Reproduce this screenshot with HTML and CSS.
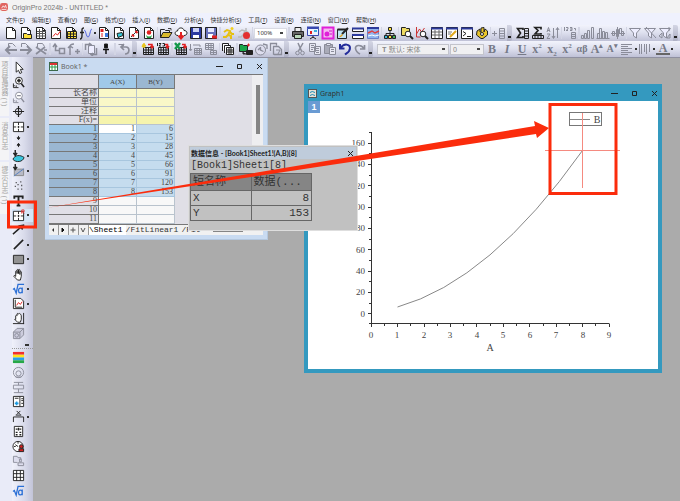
FILE: index.html
```html
<!DOCTYPE html>
<html lang="zh-CN">
<head>
    <meta charset="UTF-8">
    <meta name="viewport" content="width=device-width, initial-scale=1.0">
    <title>OriginPro 2024b - UNTITLED *</title>
    <link rel="stylesheet" href="styles.css">
</head>
<body>
    <!-- shared icon parts -->
    <svg class="defs" width="0" height="0">
        <symbol id="page" viewBox="0 0 14 14"><path d="M2.5 1.5h6l3 3v8h-9z" fill="#fff"/><path d="M8.5 1.5v3h3" fill="none"/></symbol>
        <symbol id="sheet" viewBox="0 0 14 14"><path d="M2.5 5.5h10v7h-10zM2.5 8h10M2.5 10.500h10M5 5.500v7M7.500 5.500v7M10 5.500v7"/></symbol>
        <symbol id="target" viewBox="0 0 14 14"><path d="M1.500 2.500h11v10h-11z" fill="#fff"/><path d="M7 2.500v3M7 9.500v3M1.500 7.500h3M9.500 7.500h3M6 7.500h2M7 6.500v2"/></symbol>
        <symbol id="root" viewBox="0 0 14 14"><path d="M1 8l1.500-1 2 5L6.500 2.500H13M11 6v6M11 8c-1-2-4-2-4 1.200s3 3.200 4 1" fill="none" stroke="#2a6fd6" stroke-width="1.400"/></symbol>
    </svg>

    <div class="app">
        <header class="title-bar">
            <svg class="logo" viewBox="0 0 10 10"><rect width="10" height="10" rx="3" fill="#e0655f"/><path d="M2 6.500l2-3 1.500 2L7 3l1 3.500M2 8h6" fill="none" stroke="#fff"/></svg>
            <span>OriginPro 2024b - UNTITLED *</span>
        </header>

        <nav class="menu-bar">
            <a href="#">文件(<u>F</u>)</a>
            <a href="#">编辑(<u>E</u>)</a>
            <a href="#">查看(<u>V</u>)</a>
            <a href="#">图(<u>G</u>)</a>
            <a href="#">格式(<u>O</u>)</a>
            <a href="#">插入(<u>I</u>)</a>
            <a href="#">数据(<u>D</u>)</a>
            <a href="#">分析(<u>A</u>)</a>
            <a href="#">快捷分析(<u>S</u>)</a>
            <a href="#">工具(<u>T</u>)</a>
            <a href="#">设置(<u>R</u>)</a>
            <a href="#">连接(<u>N</u>)</a>
            <a href="#">窗口(<u>W</u>)</a>
            <a href="#">帮助(<u>H</u>)</a>
        </nav>

        <!-- standard toolbar -->
        <div class="toolbar">
            <button class="tool" aria-label="新建项目"><svg viewBox="0 0 14 14"><use href="#page"/></svg></button>
            <button class="tool" aria-label="新建文件夹"><svg viewBox="0 0 14 14"><use href="#page"/><path d="M4.500 7.500h3l1 1h4v4h-8z" fill="#ffe23c"/></svg></button>
            <button class="tool" aria-label="新建工作簿"><svg viewBox="0 0 14 14"><use href="#page"/><path d="M3 5.500h9M3 7.500h9M3 10h9M5.500 3v9M8.500 3v9" stroke="#555"/></svg></button>
            <button class="tool" aria-label="新建图"><svg viewBox="0 0 14 14"><use href="#page"/><path d="M4 10.500l2.500-3 2 1.500 3-4" stroke="#e02020"/></svg></button>
            <button class="tool" aria-label="新建矩阵"><svg viewBox="0 0 14 14"><use href="#page"/><path d="M3.500 5.500h9v7h-9z" fill="#ffe23c"/><path d="M3.500 8h9M3.500 10.500h9M6.500 5.500v7M9.500 5.500v7"/></svg></button>
            <button class="tool" aria-label="新建函数图"><svg viewBox="0 0 14 14"><path d="M1 13c2 0 2-2 2-4V4c0-2 1-2 2-2M1 6.500h4" stroke-width="1.400"/><path d="M5 4c2 0 2 7 4 7s2-8 4-8" stroke="#4a5fe0"/></svg></button>
            <span class="caret"></span>
            <button class="tool" aria-label="新建布局"><svg viewBox="0 0 14 14"><use href="#page"/><path d="M3.500 3h3v3h-3z" fill="#e02020" stroke="none"/><path d="M8 7h3v4H8z" fill="#3a7be0" stroke="none"/><path d="M4 8h2M4 10h2" stroke="#e02020"/></svg></button>
            <button class="tool" aria-label="新建备注"><svg viewBox="0 0 14 14"><use href="#page"/><path d="M5 7.500l5-1 1 3-5 2z" fill="#35c8d8"/></svg></button>
            <button class="tool" aria-label="新建模板"><svg viewBox="0 0 14 14"><use href="#page"/><path d="M4 11l6-6" stroke="#333"/><path d="M8.500 5l2 2M5 8.500l2 2" stroke="#e02020" stroke-width="2"/></svg></button>
            <button class="tool" aria-label="新建图像"><svg viewBox="0 0 14 14"><use href="#page"/><circle cx="7" cy="6.500" r="2.300" fill="#e02020" stroke="none"/><path d="M4 9c2 2 4 2 6 0l-1 3H5z" fill="#25a045" stroke="none"/></svg></button>
            <span class="sep"></span>
            <button class="tool" aria-label="打开"><svg viewBox="0 0 14 14"><path d="M1.500 11.500v-8h4l1 1h4v2"/><path d="M1.500 11.500l2.500-5h9l-3 5z" fill="#d8b92c"/><path d="M9 2.500h3v2" stroke="#444"/></svg></button>
            <button class="tool" aria-label="导入"><svg viewBox="0 0 14 14"><path d="M4 9.500C0 9.500.500 5 3.500 5 4 1 9.500 1 10 4.500c4 0 4 5 0 5" fill="#fff"/><path d="M7 6v6M4.500 9.500L7 12.500l2.500-3" stroke="#e02020" stroke-width="2"/></svg></button>
            <button class="tool" aria-label="保存项目"><svg viewBox="0 0 14 14"><path d="M1.500 1.500h11v11h-11z" fill="#2c3aa0"/><path d="M4 2h6v4H4z" fill="#cfd4f4" stroke="none"/><path d="M4 9h6v3H4z" fill="#fff" stroke="none"/></svg></button>
            <button class="tool" aria-label="保存模板"><svg viewBox="0 0 14 14"><path d="M1.500 1.500h11v11h-11z" fill="#6872bb"/><path d="M4 2h6v4H4z" fill="#e6e8fa" stroke="none"/><path d="M4 8h5v4H4z" fill="#fff" stroke="none"/><path d="M8 9.500h5v3H8z" fill="#e02020" stroke="none"/></svg></button>
            <span class="sep wide"></span>
            <button class="tool" aria-label="重新计算"><svg viewBox="0 0 14 14"><circle cx="10" cy="2.500" r="1.500" fill="#f2cf1d" stroke="none"/><path d="M2 6l3-2 3 1-2 4 3 1v3M6 9l-2 2H1M8 6l2 2h2" stroke="#e6c010" stroke-width="2"/></svg></button>
            <button class="tool" aria-label="停止计算"><svg viewBox="0 0 14 14"><path d="M2 6l3-2 3 1-2 4M6 9l-2 2H1M9 2v3l3 2" stroke="#bbb" stroke-width="1.500"/><circle cx="9.500" cy="9.500" r="3.500" fill="#e33030" stroke="none"/></svg></button>
            <span class="sep"></span>
            <select class="combo zoom-level" aria-label="缩放"><option>100%</option></select>
            <span class="sep wide"></span>
            <button class="tool" aria-label="打印"><svg viewBox="0 0 14 14"><path d="M4 5V1.500h6V5" fill="#eee"/><path d="M1.500 5.500h11v5h-11z" fill="#666"/><path d="M3.500 8.500h7v4h-7z" fill="#b9d8b9"/></svg></button>
            <button class="tool" aria-label="幻灯片"><svg viewBox="0 0 14 14"><path d="M1.500 2.500h11v7h-11z" fill="#eaf4ff" stroke="#3949b0"/><path d="M1 1.500h12" stroke="#3949b0" stroke-width="2"/><path d="M7 10v2M4 13l3-2 3 2"/><path d="M4 5h2v3H4z" fill="#e02020" stroke="none"/><path d="M8 4h3v2H8z" fill="#3ab0e0" stroke="none"/></svg></button>
            <button class="tool" aria-label="视频"><svg viewBox="0 0 14 14"><path d="M1.500 1.500h11v11h-11z" fill="#f4b8f0" stroke="#e020d8" stroke-width="2"/><circle cx="6" cy="8" r="2.500" fill="#e020d8" stroke="none"/><path d="M8 5h3M9 8h2" stroke="#d010c8"/></svg></button>
            <button class="tool" aria-label="主题"><svg viewBox="0 0 14 14"><path d="M1.500 3.500h9v9h-9z" fill="#bfe3f5"/><path d="M1.500 3.500h10" stroke-width="2"/><path d="M6 8l6-6" stroke="#222" stroke-width="2"/><path d="M3 11l3-3 1 1-2 2z" fill="#e0a020" stroke="none"/></svg></button>
            <button class="tool" aria-label="排列窗口"><svg viewBox="0 0 14 14"><path d="M1.500 2.500h11v3h-11zM1.500 9.500h11v3h-11z" fill="#fff"/><path d="M1 2.500h12M1 9h12" stroke="#2c3a9c" stroke-width="2"/></svg></button>
            <button class="tool" aria-label="合并图"><svg viewBox="0 0 14 14"><path d="M1.500 2.500h11v10h-11z" fill="#8fb4ee" stroke="#6a80c8"/><path d="M1 2h12" stroke="#2c3a9c" stroke-width="2"/><path d="M2 7l4-2 3 2 4-2" stroke="#e04040" stroke-width="1.500"/><path d="M2 10l4-1 3 1 4-1" stroke="#fff"/></svg></button>
            <span class="sep"></span>
            <button class="tool" aria-label="项目管理器"><svg viewBox="0 0 14 14"><path d="M7 4v3M3 10V7.500h8V10M7 7v3"/><path d="M5.500 1.500h3v3h-3z" fill="#ffe23c"/><path d="M1.500 9.500h3v3h-3z" fill="#35b8d8"/><path d="M5.500 9.500h3v3h-3z" fill="#ffe23c"/><path d="M9.500 9.500h3v3h-3z" fill="#3fae58"/></svg></button>
            <span class="sep"></span>
            <button class="tool" aria-label="快速查找"><svg viewBox="0 0 14 14"><path d="M1.500 1.500h4l1 1h3v7h-8z" fill="#efdc62"/><circle cx="8" cy="8" r="2.800" fill="#fff"/><path d="M10 10l3 3" stroke-width="2"/></svg></button>
            <button class="tool" aria-label="查找数据"><svg viewBox="0 0 14 14"><path d="M1.500 1v10h4M1.500 8l3-5 2 3 3-4" stroke="#c33"/><circle cx="8" cy="8" r="2.800" fill="#fff"/><path d="M10 10l3 3" stroke-width="2"/></svg></button>
            <button class="tool" aria-label="结果日志"><svg viewBox="0 0 14 14"><path d="M1.500 1.500h11v11h-11z" fill="#fff"/><path d="M1 2.500h12" stroke="#2c3a9c" stroke-width="2"/><path d="M2 6h10M2 9h10M5 4v8M9 4v8" stroke="#666"/></svg></button>
            <button class="tool" aria-label="代码编辑"><svg viewBox="0 0 14 14"><path d="M1.500 1.500h11v11h-11z" fill="#fff"/><path d="M1 2.500h12" stroke="#2c3a9c" stroke-width="2"/><path d="M3 6h4M3 8h3" stroke="#777"/><path d="M5 11l6-6" stroke="#e0a81c" stroke-width="2"/></svg></button>
            <button class="tool" aria-label="命令窗口"><svg viewBox="0 0 14 14"><path d="M1.500 1.500h11v11h-11z" fill="#fff"/><path d="M1 2.500h12" stroke="#2c3a9c" stroke-width="2"/><path d="M3 5.500l3 2-3 2.500M7 10.500h4"/></svg></button>
            <button class="tool" aria-label="应用中心"><svg viewBox="0 0 14 14"><path d="M2 5l3-2v3h1V2l3-.500V6l1-3 2.500 2v4L8 12.500H6L1.500 9z" fill="#e9c52a"/><circle cx="7" cy="8" r="1.500" fill="#fff"/></svg></button>
            <span class="sep"></span>
            <button class="tool off" aria-label="添加列"><svg viewBox="0 0 14 14"><path d="M0 7.500h5M2.500 5v5M7.500 2.500h5v10h-5zM7.500 5h5M7.500 7.500h5M7.500 10h5"/></svg></button>
            <span class="handle"></span>
            <button class="tool" aria-label="列统计"><svg viewBox="0 0 14 14"><path d="M7 4V2.500H1.500l3 4.500-3 4.500H7V10" stroke-width="1.700"/><path d="M8.500 2.500h4v10h-4zM8.500 5h4M8.500 7.500h4M8.500 10h4"/></svg></button>
            <button class="tool" aria-label="行统计"><svg viewBox="0 0 14 14"><path d="M10 3.500V1.500H4l3 3-3 3.500h6V7" stroke-width="1.700"/><path d="M1.500 9.500h11v3h-11zM4 9.500v3M7 9.500v3M10 9.500v3"/></svg></button>
            <button class="tool off" aria-label="排序"><svg viewBox="0 0 14 14"><path d="M1 6l1.500-4.500L4 6M1.500 4.500h2M1 8h3l-3 4.500h3M7.500 2v10M6 10l1.500 2.500L9 10M11.500 12V2M10 4l1.500-2.500L13 4"/></svg></button>
            <span class="sep"></span>
            <button class="tool off" aria-label="设置列值"><svg viewBox="0 0 14 14"><path d="M1.500 1v4M3 1.500h2v1.500L3 4.500h2M7 1.500h2v3H7M7 3h2M11 2.500h1.500v2M8.500 6.500h4v6h-4zM8.500 8.500h4M8.500 10.500h4"/></svg></button>
            <span class="sep wide"></span>
            <button class="tool off" aria-label="柱状图"><svg viewBox="0 0 14 14"><path d="M.500 12.500v-3h2v3zM3.500 12.500v-5h2v5zM6.500 12.500v-8h2v8zM10.500 12.500v-11h2v11z"/></svg></button>
            <button class="tool off" aria-label="直方图"><svg viewBox="0 0 14 14"><path d="M.500 12.500h13M1.500 12.500v-5h2v5M3.500 12.500v-10h2v10M6.500 12.500v-7h2v7M9.500 12.500v-6h2v6"/></svg></button>
            <button class="tool off" aria-label="箱线图"><svg viewBox="0 0 14 14"><path d="M0 7.500h14M1.500 5.500h2v4h-2zM5.500 3.500h2v7h-2zM10.500 5.500h2v4h-2zM6.500 1v12M8.500 2.500h2v5h-2z"/></svg></button>
            <span class="sep"></span>
            <button class="tool off" aria-label="筛选"><svg viewBox="0 0 14 14"><path d="M1.500 2.500h11L8.500 7v5l-3-2V7z" fill="#eef"/></svg></button>
            <button class="tool off" aria-label="清除筛选"><svg viewBox="0 0 14 14"><path d="M1.500 2.500h11L8.500 7v5l-3-2V7z" fill="#eef"/><path d="M3 1l10 11"/></svg></button>
            <button class="tool off" aria-label="重新筛选"><svg viewBox="0 0 14 14"><path d="M1.500 2.500h11L8.500 7v5l-3-2V7z" fill="#eef"/><path d="M1 10l3-3v5zM9 12l3-4v4zM11 1v4"/></svg></button>
            <span class="handle"></span>
        </div>

        <!-- import, edit and format toolbar -->
        <div class="toolbar">
            <button class="tool off" aria-label="后退"><svg viewBox="0 0 14 14"><path d="M4.500 5V1.500h4l3 3"/><path d="M13 8H3M6 4L2 8l4 4" stroke-width="2"/></svg></button>
            <button class="tool off" aria-label="前进"><svg viewBox="0 0 14 14"><path d="M2.500 5V1.500h4l3 3"/><path d="M1 8h10M8 4l4 4-4 4" stroke-width="2"/></svg></button>
            <button class="tool off" aria-label="移除"><svg viewBox="0 0 14 14"><path d="M3.500 5V1.500h5l2 3"/><path d="M2 5l10 7M2 12l9-7M10 8h3" stroke-width="1.700"/></svg></button>
            <span class="sep wide"></span>
            <button class="tool off" aria-label="添加窗口"><svg viewBox="0 0 14 14"><path d="M1 5l2-3 2 3M3.500 3v5.500h4M7.500 6.500h5v5h-5z" stroke-width="1.500"/></svg></button>
            <button class="tool off" aria-label="添加链接"><svg viewBox="0 0 14 14"><path d="M3 13V5c0-2 2-3 4-3M1 6l2-2 3 2M8 9.500h5M10.500 7v5" stroke-width="1.500"/></svg></button>
            <span class="sep"></span>
            <button class="tool off" aria-label="刷新"><svg viewBox="0 0 14 14"><path d="M4.500 3.500h6v8h-6z" fill="#eef"/><path d="M1.500 8V2.500H7M12.500 6v6.500H7M5 1l2 1.500L5 4M9 11l-2 1.500L9 14" stroke-width="1.500"/></svg></button>
            <button class="tool" aria-label="固定"><svg viewBox="0 0 14 14"><path d="M5.500 2h3v4h-3z" fill="#111"/><path d="M4 7.500h6M7 8v4" stroke="#111" stroke-width="1.500"/></svg></button>
            <span class="sep wide"></span>
            <button class="tool off" aria-label="返回"><svg viewBox="0 0 14 14"><path d="M1.500 2.500h5v2"/><path d="M7 2L4 5l3 3M4 5h5c4 0 4 7-1 7" stroke-width="1.700"/></svg></button>
            <span class="handle"></span>
            <button class="tool" aria-label="导入向导"><svg viewBox="0 0 14 14"><use href="#sheet"/><path d="M1 3l4 1M3 1v5M1 5l3-3" stroke="#e8c61c" stroke-width="1.500"/><path d="M7 2.500h4V5M9.500 4l1.500 2 1.500-2" stroke="#e02020" stroke-width="1.500"/></svg></button>
            <button class="tool" aria-label="导入ASCII"><svg viewBox="0 0 14 14"><use href="#sheet"/><path d="M1.500 1v3M3 1.500h2l-2 2.500h2M6.500 1.500h2V4h-2" stroke-width="1"/><path d="M9 2.500h2.500V5M10 4l1.500 2L13 4" stroke="#e02020" stroke-width="1.500"/></svg></button>
            <span class="sep wide"></span>
            <button class="tool" aria-label="导入Excel"><svg viewBox="0 0 14 14"><use href="#sheet"/><path d="M1 1l5 6M6 1L1 7" stroke="#15984a" stroke-width="2.400"/><path d="M8 2.500h3V5M9.500 4L11 6l1.500-2" stroke="#e02020" stroke-width="1.500"/></svg></button>
            <button class="tool off" aria-label="导入多个文件"><svg viewBox="0 0 14 14"><path d="M5.500 6.500h7v6h-7zM5.500 8.500h7M5.500 10.500h7M8 6.500v6M10.500 6.500v6M1.500 2v6M0 7l1.500 2L3 7M4 3h7v2"/></svg></button>
            <button class="tool off" aria-label="导入数据库"><svg viewBox="0 0 14 14"><path d="M1.500 1.500h8v6h-8zM1.500 3.500h8M1.500 5.500h8M4.500 1.500v6M7 1.500v6M6.500 8.500h6v4h-6zM6.500 10.500h6M9.500 8.500v4"/></svg></button>
            <span class="sep"></span>
            <button class="tool" aria-label="批处理"><svg viewBox="0 0 14 14"><path d="M1.500 9V1.500h6v2M3.500 11V3.500h6v2" fill="#fff"/><path d="M5.500 5.500h7v7h-7zM5.500 8h7M5.500 10h7M8 5.500v7M10 5.500v7" fill="#fff"/></svg></button>
            <span class="sep wide"></span>
            <button class="tool" aria-label="连接数据"><svg viewBox="0 0 14 14"><path d="M.500 2.500h3l1 1h4v6h-8z" fill="#19a74a"/><path d="M8 3h3M9.500 1.500v3" stroke="#e02020"/><path d="M7.500 8.500h6v4h-6zM4 10v2h3" fill="#222"/></svg></button>
            <button class="tool off" aria-label="时钟"><svg viewBox="0 0 14 14"><circle cx="6.500" cy="8" r="5" fill="#dde"/><path d="M6.500 5v3l3 1.500M9 2l4 1v4M4 8l2-2" stroke-width="1.300"/></svg></button>
            <button class="tool off" aria-label="复制窗口"><svg viewBox="0 0 14 14"><path d="M1.500 9V1.500h6v2M4.500 12V4.500h5l3 3v5h-7z" stroke-width="1.300"/><path d="M7 8h4l-2 4"/></svg></button>
            <span class="handle"></span>
            <button class="tool off" aria-label="剪切"><svg viewBox="0 0 14 14"><path d="M5 1l3.500 8M10 1L5.500 9" stroke-width="1.500"/><circle cx="4.500" cy="11" r="1.800"/><circle cx="9.500" cy="11" r="1.800"/></svg></button>
            <button class="tool off" aria-label="复制"><svg viewBox="0 0 14 14"><path d="M1.500 1.500h6v8h-6zM3 3.500h3M3 5.500h3M3 7.500h2M6.500 4.500h6v8h-6z" fill="#e6e7f2"/><path d="M8 6.500h3M8 8.500h3M8 10.500h3"/></svg></button>
            <button class="tool off" aria-label="粘贴"><svg viewBox="0 0 14 14"><path d="M1.500 2.500h8v9h-8z" fill="#a9abb8"/><path d="M3.500 1.500h4v2h-4zM6.500 5.500h6v7h-6z" fill="#e6e7f2"/><path d="M8 7.500h3M8 9.500h3"/></svg></button>
            <button class="tool" aria-label="撤销"><svg viewBox="0 0 14 14"><path d="M2 2v4.500h4.500M2.500 6C6 1 12 2 12 6s-3 5-5 6.500" stroke="#232c9a" stroke-width="2"/></svg></button>
            <button class="tool off" aria-label="重做"><svg viewBox="0 0 14 14"><path d="M11.500 3v4H7M11 6.500C8 2 2 3 2.500 6.500S5 11 7 12" stroke-width="1.700"/></svg></button>
            <span class="handle"></span>
            <select class="combo font-name" aria-label="字体"><option>𝐓 默认: 宋体</option></select>
            <select class="combo font-size" aria-label="字号"><option>0</option></select>
            <button class="tool fmt" aria-label="粗体"><b>B</b></button>
            <button class="tool fmt" aria-label="斜体"><i>I</i></button>
            <button class="tool fmt" aria-label="下划线"><u>U</u></button>
            <button class="tool fmt" aria-label="上标">x<sup>2</sup></button>
            <button class="tool fmt" aria-label="下标">x<sub>2</sub></button>
            <button class="tool fmt" aria-label="上下标">x<sup>2</sup></button>
            <button class="tool fmt greek" aria-label="希腊字母">αβ</button>
            <button class="tool fmt" aria-label="增大字体">A<sup>▴</sup></button>
            <button class="tool fmt small" aria-label="减小字体">A<sup>▾</sup></button>
            <button class="tool off" aria-label="对齐"><svg viewBox="0 0 14 14"><path d="M1 2.500h11M1 4.500h7M1 6.500h11M1 8.500h7M1 10.500h11M1 12.500h7"/></svg></button>
            <span class="caret"></span>
            <button class="tool off" aria-label="线条样式"><svg viewBox="0 0 14 14"><path d="M1.500 2v10M3.500 2v10M6.500 2v8M8.500 2v10M11.500 2v8"/></svg></button>
            <span class="caret"></span>
            <button class="tool fmt color" aria-label="字体颜色">A</button>
            <span class="caret"></span>
        </div>

        <div class="main">
            <div class="dock">
                <a href="#" class="dock-tab">项目管理器 (1)</a>
                <a href="#" class="dock-tab">消息日志</a>
                <a href="#" class="dock-tab">提示日志 (1)</a>
            </div>

            <div class="tools">
                <button class="tool" aria-label="指针"><svg viewBox="0 0 14 14"><path d="M4.500 1v11l2.500-2 1.500 3.500 2-1L9 9h3z" fill="#fff"/></svg></button>
                <button class="tool" aria-label="放大"><svg viewBox="0 0 14 14"><circle cx="7.500" cy="5" r="3.700" fill="#fff"/><path d="M5.500 5h4M7.500 3v4M10 8l3 4" stroke-width="1.700"/><path d="M1.500 8v4.500H7M1.500 10.500H3M4.500 12v-2"/></svg></button>
                <button class="tool off" aria-label="缩小"><svg viewBox="0 0 14 14"><circle cx="7.500" cy="5" r="3.700" fill="#fff"/><path d="M5.500 5h4M10 8l3 4" stroke-width="1.500"/><path d="M1.500 8v4.500H7M1.500 10.500H3M4.500 12v-2"/></svg></button>
                <button class="tool" aria-label="屏幕读取"><svg viewBox="0 0 14 14"><circle cx="7" cy="7" r="3.500"/><path d="M7 1v12M1 7h12" stroke-width="1.300"/></svg></button>
                <button class="tool drop" aria-label="数据读取"><svg viewBox="0 0 14 14"><use href="#target"/></svg></button>
                <button class="tool" aria-label="数据选择"><svg viewBox="0 0 14 14"><path d="M7 1v3M5.500 3L7 5l1.500-2zM7 13v-3M5.500 11L7 9l1.500 2z" fill="#222"/></svg></button>
                <button class="tool drop" aria-label="区域选择"><svg viewBox="0 0 14 14"><path d="M1 10c2-5 8-5 12-2-1 5-9 6-12 2z" fill="#3cc6de"/><path d="M3.500 0v5M1.500 3l2 3 2-3" stroke-width="1.500"/></svg></button>
                <button class="tool drop" aria-label="区域屏蔽"><svg viewBox="0 0 14 14"><path d="M2.500 5.500h10v7h-10z" fill="#b8bac6" stroke="#888"/><path d="M2 13L13 5" stroke="#557fc0"/><path d="M3.500 0v5M1.500 3l2 3 2-3" stroke-width="1.500"/></svg></button>
                <button class="tool" aria-label="绘制数据"><svg viewBox="0 0 14 14"><path d="M4 4h1M9 3h1M3 8h1M10 7h1M6 11h1M10 11h1M6 6h1" stroke-width="1.400"/></svg></button>
                <button class="tool" aria-label="文本"><svg viewBox="0 0 14 14"><path d="M2.500 5V2.500h9V5M7 3v9M5 12.500h4" stroke-width="2"/></svg></button>
                <button class="tool drop active" aria-label="注释"><svg viewBox="0 0 14 14"><use href="#target"/><path d="M10.500 5V1h2.500v2h-2.500M11.500 3l1.500 2" stroke="#e23b3b"/></svg></button>
                <button class="tool" aria-label="箭头"><svg viewBox="0 0 14 14"><path d="M1 12l8-7" stroke-width="1.500"/><path d="M7 3l6-1-2 5z" fill="#222"/></svg></button>
                <button class="tool drop" aria-label="直线"><svg viewBox="0 0 14 14"><path d="M2 12L12 2" stroke-width="1.700"/></svg></button>
                <button class="tool drop" aria-label="矩形"><svg viewBox="0 0 14 14"><path d="M1.500 2.500h11v9h-11z" fill="#929292"/></svg></button>
                <button class="tool" aria-label="平移"><svg viewBox="0 0 14 14"><path d="M4 9V3.500q1-1 1.500 0V6 2q1-1 1.500 0v4-4q1-1 1.500 0v5-3q1-1 1.500 0v5l-1 4H6L2 9q0-2 2 0" fill="#fff"/></svg></button>
                <button class="tool drop" aria-label="插入公式"><svg viewBox="0 0 14 14"><use href="#root"/></svg></button>
                <button class="tool drop" aria-label="插入图"><svg viewBox="0 0 14 14"><path d="M1.500 1.500h8l3 3v8h-11z" fill="#fff"/><path d="M3.500 3v8H11" /><path d="M5 9l2-3 2 2 2-3" stroke="#e02020"/></svg></button>
                <button class="tool" aria-label="重新缩放"><svg viewBox="0 0 14 14"><path d="M1 12.500h12M12.500 1v12"/><path d="M4 8V4q1-1 1.500 0V2q1-1 1.500 0 1-1 1.500 0 1 0 1.500 2v4l-1 3H6L3 8q0-1 1 0" fill="#fff"/></svg></button>
                <button class="tool off" aria-label="旋转"><svg viewBox="0 0 14 14"><path d="M1.500 5.500h7v7h-7zM1.500 5.500l4-4h7v7l-4 4M8.500 5.500l4-4" fill="#ccd"/><circle cx="5" cy="9" r="2"/></svg></button>
                <span class="split"></span>
                <button class="tool" aria-label="颜色"><svg viewBox="0 0 14 14"><path d="M1 2.500h12" stroke="#f03030" stroke-width="3"/><path d="M1 5.500h12" stroke="#ffe51c" stroke-width="3"/><path d="M1 8.500h12" stroke="#28a0e8" stroke-width="3"/><path d="M1 11.500h12" stroke="#27a848" stroke-width="3"/></svg></button>
                <button class="tool off" aria-label="气泡"><svg viewBox="0 0 14 14"><circle cx="7" cy="7" r="5.500"/><circle cx="7" cy="8" r="2.800"/><path d="M4 12h6"/></svg></button>
                <button class="tool off" aria-label="比例尺"><svg viewBox="0 0 14 14"><path d="M2 1.500h10M7 1.500v3M1.500 4.500h11v4h-11zM7 8.500v4M2 12.500h10"/></svg></button>
                <button class="tool" aria-label="新图例"><svg viewBox="0 0 14 14"><path d="M1.500 1.500h11v11h-11z" fill="#fff"/><path d="M3 3.500h4M8.500 2v10M10 4h2M10 6h2M10 9h2"/><path d="M3 9h4M5 7v4" stroke="#1c9ae0" stroke-width="1.700"/></svg></button>
                <button class="tool drop" aria-label="添加标记"><svg viewBox="0 0 14 14"><path d="M1.500 13V7.500h11V13M5 1l4 4M9 1L5 5M4 5.500h6"/></svg></button>
                <button class="tool" aria-label="图层内容"><svg viewBox="0 0 14 14"><path d="M2.500 1.500h9v11h-9z" fill="#fff"/><path d="M4 4.500h2M8 4.500h2M4 8h2M8 8h2M4 10.500h2M8 10.500h2M7 3v3" stroke-width="1.400"/></svg></button>
                <button class="tool" aria-label="日期时间"><svg viewBox="0 0 14 14"><circle cx="6.500" cy="7" r="5.500" fill="#fff"/><path d="M6.500 7l-3-2M6.500 2v2M2 7h2"/><circle cx="10" cy="7" r="2" fill="#d02020"/><path d="M7.500 12.500v-3h5v3z" fill="#d02020"/></svg></button>
                <button class="tool off" aria-label="链接文件夹"><svg viewBox="0 0 14 14"><path d="M1.500 9V2.500h4l1 1.500h3v2M1.500 9H6M8 5.500h2v3H8zM6.500 9.500h6v3h-6z" fill="#dde"/></svg></button>
                <button class="tool" aria-label="插入表格"><svg viewBox="0 0 14 14"><path d="M1.500 1.500h11v11h-11z" fill="#fff"/><path d="M1.500 5h11M1.500 9h11M5 1.500v11M9 1.500v11"/></svg></button>
                <button class="tool" aria-label="公式"><svg viewBox="0 0 14 14"><use href="#root"/></svg></button>
            </div>

            <main class="workspace">
                <section class="window book">
                    <div class="window-title">
                        <svg class="window-icon" viewBox="0 0 9 9"><rect x=".5" y=".5" width="8" height="8" fill="#fff" stroke="#3b6a4a"/><path d="M1 2h7" stroke="#d33" stroke-width="2"/><path d="M1 5h7M3 3v5M6 3v5" stroke="#2a9a4a"/></svg>
                        <span class="window-name">Book1 *</span>
                        <button class="win-btn" aria-label="最小化"><svg viewBox="0 0 7 7"><path d="M0 3.500h7"/></svg></button>
                        <button class="win-btn" aria-label="最大化"><svg viewBox="0 0 7 7"><path d="M1.500 1.500h4v4h-4z"/></svg></button>
                        <button class="win-btn" aria-label="关闭"><svg viewBox="0 0 7 7"><path d="M1 1l5 5M6 1L1 6"/></svg></button>
                    </div>
                    <div class="sheet-area">
                        <table class="sheet">
                            <thead>
                                <tr><th></th><th class="col-a">A(X)</th><th>B(Y)</th></tr>
                            </thead>
                            <tbody class="meta">
                                <tr><th>长名称</th><td></td><td></td></tr>
                                <tr><th>单位</th><td></td><td></td></tr>
                                <tr><th>注释</th><td></td><td></td></tr>
                                <tr><th>F(x)=</th><td></td><td></td></tr>
                            </tbody>
                            <tbody class="selected">
                                <tr><th>1</th><td>1</td><td>6</td></tr>
                                <tr><th>2</th><td>2</td><td>15</td></tr>
                                <tr><th>3</th><td>3</td><td>28</td></tr>
                                <tr><th>4</th><td>4</td><td>45</td></tr>
                                <tr><th>5</th><td>5</td><td>66</td></tr>
                                <tr><th>6</th><td>6</td><td>91</td></tr>
                                <tr><th>7</th><td>7</td><td>120</td></tr>
                                <tr><th>8</th><td>8</td><td>153</td></tr>
                            </tbody>
                            <tbody>
                                <tr><th>9</th><td></td><td></td></tr>
                                <tr><th>10</th><td></td><td></td></tr>
                                <tr><th>11</th><td></td><td></td></tr>
                            </tbody>
                        </table>
                        <div class="scroll-v"><div class="thumb"></div></div>
                    </div>
                    <div class="sheet-tabs">
                        <button class="nav-btn" aria-label="上一个"><svg viewBox="0 0 8 8"><path d="M5 2L3 4l2 2z" fill="#333"/></svg></button>
                        <button class="nav-btn" aria-label="下一个"><svg viewBox="0 0 8 8"><path d="M3 2l2 2-2 2z" fill="#111" stroke="#111"/></svg></button>
                        <button class="nav-btn" aria-label="添加"><svg viewBox="0 0 8 8"><path d="M1.500 4h5M4 1.500v5" stroke="#555"/></svg></button>
                        <button class="nav-btn" aria-label="列表"><svg viewBox="0 0 8 8"><path d="M2 2l2 4 2-4" stroke="#555" fill="none"/></svg></button>
                        <a href="#" class="sheet-tab current">\Sheet1</a>
                        <a href="#" class="sheet-tab">/FitLinear1</a>
                        <a href="#" class="sheet-tab">/Fit</a>
                        <div class="scroll-h"><div class="thumb"></div></div>
                    </div>
                </section>

                <section class="window graph">
                    <div class="window-title">
                        <svg class="window-icon" viewBox="0 0 9 9"><rect x=".5" y=".5" width="8" height="8" fill="#e7e2d8" stroke="#555"/><path d="M2 3.500q2-2 5 0M2 6.500q2-2 5 0" fill="none" stroke="#1a8db8"/></svg>
                        <span class="window-name">Graph1</span>
                        <button class="win-btn" aria-label="最小化"><svg viewBox="0 0 7 7"><path d="M0 3.500h7"/></svg></button>
                        <button class="win-btn" aria-label="最大化"><svg viewBox="0 0 7 7"><path d="M1.500 1.500h4v4h-4z"/></svg></button>
                        <button class="win-btn" aria-label="关闭"><svg viewBox="0 0 7 7"><path d="M1 1l5 5M6 1L1 6"/></svg></button>
                    </div>
                    <div class="graph-page">
                        <svg class="plot" viewBox="0 0 350 268">
                            <rect x="0" y="0" width="12" height="12" fill="#6a9bd3"/>
                            <text class="layer" x="6" y="9">1</text>

                            <!-- axes -->
                            <path class="axis" d="M63.500 31v192M63 222.500h238.500"/>
                            <path class="axis" d="M60 42.500h3M60 63.500h3M60 84.500h3M60 106.500h3M60 127.500h3M60 148.500h3M60 170.500h3M60 191.500h3M60 212.500h3"/>
                            <path class="axis" d="M61 31.500h2M61 52.500h2M61 74.500h2M61 95.500h2M61 116.500h2M61 138.500h2M61 159.500h2M61 180.500h2M61 202.500h2M61 222.500h2"/>
                            <path class="axis" d="M63.500 223v3M89.500 223v3M116.500 223v3M142.500 223v3M168.500 223v3M195.500 223v3M221.500 223v3M248.500 223v3M274.500 223v3M301.500 223v3"/>
                            <path class="axis" d="M76.500 223v2M102.500 223v2M129.500 223v2M155.500 223v2M182.500 223v2M208.500 223v2M235.500 223v2M261.500 223v2M287.500 223v2"/>

                            <g class="tick-y">
                                <text x="57" y="45">160</text>
                                <text x="57" y="66">140</text>
                                <text x="57" y="88">120</text>
                                <text x="57" y="109">100</text>
                                <text x="57" y="130">80</text>
                                <text x="57" y="152">60</text>
                                <text x="57" y="173">40</text>
                                <text x="57" y="194">20</text>
                                <text x="57" y="216">0</text>
                            </g>
                            <g class="tick-x">
                                <text x="63" y="237">0</text>
                                <text x="89" y="237">1</text>
                                <text x="116" y="237">2</text>
                                <text x="142" y="237">3</text>
                                <text x="169" y="237">4</text>
                                <text x="195" y="237">5</text>
                                <text x="222" y="237">6</text>
                                <text x="248" y="237">7</text>
                                <text x="275" y="237">8</text>
                                <text x="301" y="237">9</text>
                            </g>
                            <text class="axis-title" x="182" y="250">A</text>
                            <text class="axis-title" transform="translate(41 127) rotate(-90)">B</text>

                            <!-- data curve -->
                            <path class="curve" d="M89.500 206Q182 180 274.500 49.500"/>

                            <!-- legend -->
                            <rect class="legend" x="261.500" y="11.500" width="32" height="13"/>
                            <path class="curve" d="M262 18.500h20"/>
                            <text class="axis-title" x="289" y="22">B</text>

                            <path class="cross" d="M274.500 12v75M237 49.500h75"/>
                        </svg>
                    </div>
                </section>

                <section class="window info">
                    <div class="info-title">
                        <span class="window-name">数据信息 - [Book1]Sheet1!(A,B)[8]</span>
                        <button class="win-btn" aria-label="关闭"><svg viewBox="0 0 7 7"><path d="M1 1l5 5M6 1L1 6"/></svg></button>
                    </div>
                    <p class="info-path">[Book1]Sheet1[8]</p>
                    <table class="info-table">
                        <tr><th>短名称</th><th>数据(...</th></tr>
                        <tr><td>X</td><td class="num">8</td></tr>
                        <tr><td>Y</td><td class="num">153</td></tr>
                    </table>
                </section>
            </main>
        </div>

        <!-- callouts over the windows -->
        <svg class="callouts">
            <rect x="8.500" y="202" width="27" height="25"/>
            <rect x="550" y="104.500" width="66" height="89"/>
            <path d="M46 208L535 126l-1-5 15 7-12 10-1-4z"/>
        </svg>
    </div>
</body>
</html>
```

FILE: styles.css
```css
* {
    box-sizing: border-box;
}
body {
    margin: 0;
    font-family: "Noto Sans", "Noto Sans CJK SC", sans-serif;
    font-size: 6px;
    color: #333;
    background-color: #ababab;
}
button {
    border: none;
    background: none;
    padding: 0;
    margin: 0;
    font: inherit;
    color: inherit;
}
a {
    color: inherit;
    text-decoration: none;
}
svg {
    display: block;
}
.defs {
    position: absolute;
}
.app {
    position: relative;
    display: flex;
    flex-direction: column;
    height: 100vh;
    overflow: hidden;
}

/* title and menu */
.title-bar {
    display: flex;
    align-items: center;
    gap: 4px;
    height: 13px;
    padding-top: 1px;
    font-family: "Liberation Sans", sans-serif;
    font-size: 7px;
    background-color: #f3f3f3;
    color: #777;
}
.logo {
    width: 8px;
    height: 8px;
}
.menu-bar {
    display: flex;
    align-items: center;
    gap: 7px;
    height: 12px;
    padding-left: 6px;
    background-color: #eff1fd;
    white-space: nowrap;
}

/* toolbars */
.toolbar {
    display: flex;
    align-items: center;
    gap: 1px;
    height: 16px;
    padding-left: 4px;
    overflow: hidden;
    background: linear-gradient(#f2f3fc, #dddfee 50%, #bfc1d6);
}
.tool {
    flex: none;
    width: 14px;
    height: 14px;
    line-height: 14px;
}
.tool svg {
    width: 100%;
    height: 100%;
    fill: none;
    stroke: #222;
}
.tool.off svg {
    stroke: #8a8c99;
}
.sep {
    flex: none;
    width: 1px;
    height: 12px;
    background-color: #d3d5e4;
}
.sep.wide {
    width: 2px;
}
.caret {
    flex: none;
    width: 2px;
    height: 2px;
    background-color: #333;
}
.handle {
    flex: none;
    width: 5px;
    height: 16px;
    margin-right: 3px;
    background: linear-gradient(#d3d5e4, #aeb0c4);
    border-radius: 0 2px 2px 0;
    display: flex;
    align-items: flex-end;
    justify-content: center;
    padding-bottom: 3px;
}
.handle::after {
    content: "";
    width: 3px;
    height: 2px;
    background-color: #222;
}
.combo {
    flex: none;
    height: 11px;
    padding: 0 2px;
    border: 1px solid #d9dae3;
    appearance: none;
    font-family: inherit;
    font-size: 7px;
    line-height: 9px;
    color: #333;
    background: linear-gradient(#444, #444) no-repeat right 3px center / 3px 2px #fff;
}
.zoom-level {
    width: 33px;
    font-size: 6px;
}
.font-name,
.font-size {
    color: #888;
    background-color: #f0f0f2;
    border-color: #c3c4cc;
}
.font-name {
    width: 72px;
    padding-left: 4px;
}
.font-size {
    width: 34px;
}
.fmt {
    font-family: "Liberation Serif", serif;
    font-size: 12px;
    font-weight: bold;
    color: #777a88;
    text-align: center;
    white-space: nowrap;
}
.fmt sup,
.fmt sub {
    font-size: 7px;
    line-height: 1px;
}
.fmt.small,
.fmt.greek {
    font-size: 10px;
}
.fmt.color {
    height: 12px;
    line-height: 10px;
    border-bottom: 2px solid #666;
}

/* left side */
.main {
    display: flex;
    flex: 1;
    min-height: 0;
}
.dock {
    display: flex;
    flex-direction: column;
    gap: 2px;
    width: 12px;
    background-color: #e9ebf8;
}
.dock-tab {
    writing-mode: vertical-rl;
    width: 9px;
    line-height: 9px;
    font-size: 7px;
    padding: 4px 0 10px;
    color: #a5a5a5;
    background-color: #f4f4f6;
    white-space: nowrap;
}
.tools {
    display: flex;
    flex-direction: column;
    justify-content: space-between;
    width: 21px;
    padding: 4px 0;
    background: linear-gradient(to right, #f0f1fb, #d8daea 60%, #c2c4d8);
}
.tools .tool {
    display: flex;
    align-items: center;
    width: 21px;
    height: 13px;
}
.tools .tool svg {
    flex: none;
    width: 13px;
    height: 13px;
}
.tools .drop::after {
    content: "";
    width: 2px;
    height: 2px;
    margin-left: 2px;
    background-color: #333;
}
.tools .active {
    background-color: #d5e6f8;
}
.split {
    height: 8px;
    border-bottom: 1px dotted #999;
    background: linear-gradient(#333, #333) no-repeat right 4px top 3px / 4px 2px;
}

/* windows */
.workspace {
    flex: 1;
    border-top: 1px solid #8f90a0;
    background-color: #ababab;
}
.window {
    position: absolute;
    display: flex;
    flex-direction: column;
}
.window-title {
    display: flex;
    align-items: center;
    gap: 3px;
    height: 16px;
}
.window-icon {
    width: 9px;
    height: 9px;
}
.window-name {
    flex: 1;
    font-size: 7px;
    white-space: nowrap;
}
.win-btn svg {
    width: 7px;
    height: 7px;
    fill: none;
    stroke: #222;
}
.window-title .win-btn {
    margin-left: 10px;
}

.book {
    left: 45px;
    top: 58px;
    width: 223px;
    padding: 0 4px 4px;
    background-color: #c9dbf1;
    border: 1px solid #b5c8de;
    border-width: 0 1px 1px 0;
}
.book .window-name {
    color: #666;
}
.sheet-area {
    display: flex;
    justify-content: space-between;
    height: 150px;
    overflow: hidden;
    background-color: #e0dfe6;
    border-top: 1px solid #777;
}
.sheet {
    width: 126px;
    table-layout: fixed;
    border-collapse: separate;
    border-spacing: 0;
    font-family: "Liberation Serif", "Noto Sans CJK SC", serif;
    font-size: 8px;
    line-height: 8px;
    color: #444;
}
.sheet th,
.sheet td {
    height: 9px;
    padding: 0 1px;
    text-align: right;
    font-weight: normal;
    white-space: nowrap;
    overflow: hidden;
    border-right: 1px solid #b9c3cd;
    border-bottom: 1px solid #b9c3cd;
    background-color: #f8f8f8;
}
.sheet th {
    background-color: #e0dfe6;
    border-color: #777;
}
.sheet thead th {
    width: 38px;
    height: 14px;
    text-align: center;
    font-size: 7px;
    background-color: #9bb7d2;
}
.sheet thead th:first-child {
    width: 50px;
    background-color: #e0dfe6;
}
.sheet thead .col-a {
    background-color: #a0c9e9;
}
.sheet .meta td {
    background-color: #f9f8c8;
}
.sheet .meta tr:last-child td {
    background-color: #f6f4ad;
}
.sheet .selected th {
    background-color: #9bb7d2;
}
.sheet .selected td {
    background-color: #c5dcee;
    border-color: #a8c6de;
}
.sheet .selected tr:first-child th {
    background-color: #a0c9e9;
}
.sheet .selected tr:first-child td:nth-child(2) {
    background-color: #fff;
}
.scroll-v {
    width: 11px;
    padding: 10px 3px 0 4px;
    background-color: #eeeef0;
}
.scroll-v .thumb {
    height: 49px;
    background-color: #858585;
}
.sheet-tabs {
    display: flex;
    align-items: center;
    height: 11px;
    overflow: hidden;
    background-color: #f1f1f1;
    border-top: 1px solid #777;
    font-family: "Liberation Mono", monospace;
    font-size: 8px;
    line-height: 10px;
    white-space: nowrap;
}
.nav-btn {
    flex: none;
    width: 10px;
    height: 10px;
    border-right: 1px solid #999;
}
.nav-btn svg {
    width: 8px;
    height: 8px;
}
.sheet-tab {
    padding-right: 3px;
}
.sheet-tab.current {
    background-color: #fff;
    color: #000;
}
.scroll-h {
    flex: 1;
    padding-left: 9px;
}
.scroll-h .thumb {
    width: 30px;
    height: 3px;
    background-color: #858585;
}

.graph {
    left: 304px;
    top: 84px;
    width: 358px;
    padding: 1px 4px 4px;
    background-color: #3499bf;
}
.graph-page {
    background-color: #fff;
}
.plot {
    width: 100%;
    height: auto;
    font-family: "Liberation Serif", serif;
    font-size: 9px;
    fill: #444;
}
.layer {
    font-family: "Liberation Sans", sans-serif;
    font-weight: bold;
    fill: #fff;
    text-anchor: middle;
}
.axis {
    fill: none;
    stroke: #333;
}
.tick-y {
    text-anchor: end;
}
.tick-x,
.axis-title {
    text-anchor: middle;
}
.axis-title {
    font-size: 10px;
}
.curve {
    fill: none;
    stroke: #888;
}
.legend {
    fill: none;
    stroke: #777;
}
.cross {
    fill: none;
    stroke: #f58a80;
}

.info {
    left: 188px;
    top: 145px;
    width: 170px;
    padding: 1px 1px 9px;
    background-color: #c1c1c1;
    border: 1px solid #dedede;
    color: #333;
}
.info-title {
    display: flex;
    align-items: center;
    height: 12px;
    padding: 0 2px 0 1px;
    font-family: "Lato", "Noto Sans CJK SC", sans-serif;
    font-weight: bold;
    color: #222;
    background-color: #bfccdb;
}
.info-path {
    margin: 0;
    padding-left: 1px;
    font-family: "Liberation Mono", monospace;
    font-size: 10px;
    line-height: 14px;
}
.info-table {
    width: 122px;
    table-layout: fixed;
    border-collapse: collapse;
    font-family: "Liberation Mono", "Noto Sans CJK SC", monospace;
    font-size: 11px;
    line-height: 14px;
}
.info-table th,
.info-table td {
    height: 15px;
    padding: 0 2px;
    text-align: left;
    font-weight: normal;
    border: 1px solid #666;
}
.info-table th {
    height: 17px;
    background-color: #858585;
}
.info-table .num {
    text-align: right;
}

.callouts {
    position: absolute;
    left: 0;
    top: 0;
    width: 100%;
    height: 100%;
    pointer-events: none;
}
.callouts rect {
    fill: none;
    stroke: #fb2c0c;
    stroke-width: 3px;
}
.callouts path {
    fill: #fb2c0c;
}
```
